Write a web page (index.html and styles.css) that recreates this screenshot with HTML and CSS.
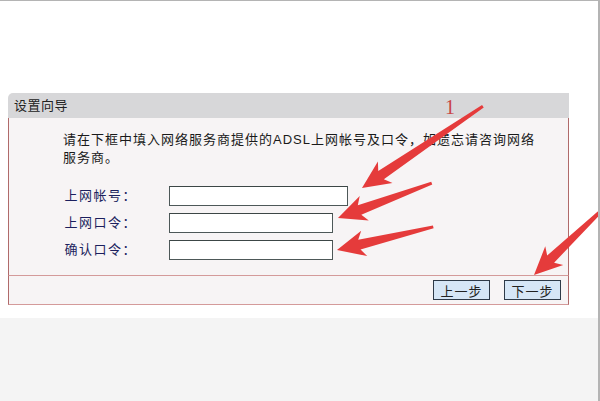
FILE: index.html
```html
<!DOCTYPE html>
<html lang="zh-CN">
<head>
  <meta charset="UTF-8">
  <title>设置向导</title>
  <link rel="stylesheet" href="styles.css">
</head>
<body>
<div class="frame">
  <div class="top">
    <div class="panel">
      <div class="panel-head">设置向导</div>
      <div class="panel-body">
        <p class="intro">请在下框中填入网络服务商提供的ADSL上网帐号及口令，如遗忘请咨询网络服务商。</p>
        <div class="form-grid">
          <label for="user">上网帐号：</label>
          <input type="text" id="user" class="long">
          <label for="pass">上网口令：</label>
          <input type="password" id="pass">
          <label for="pass2">确认口令：</label>
          <input type="password" id="pass2">
        </div>
      </div>
      <div class="panel-foot">
        <button>上一步</button>
        <button>下一步</button>
      </div>
    </div>
  </div>
  <div class="bottom"></div>

  <svg class="marks" width="600" height="401" viewBox="0 0 600 401">
    <text x="445" y="114" class="num">1</text>
    <g fill="#e53b3b">
      <polygon transform="translate(362,188) rotate(-34.1)" points="0,0 28,-13 23,-5 146,-1.5 146,1.5 23,5 28,13"/>
      <polygon transform="translate(338,218) rotate(-20.4)" points="0,0 28,-13 23,-5 100,-1.5 100,1.5 23,5 28,13"/>
      <polygon transform="translate(337,250) rotate(-13.5)" points="0,0 28,-13 23,-5 99,-1.5 99,1.5 23,5 28,13"/>
      <polygon transform="translate(534,275) rotate(-43.7)" points="0,0 28,-13 23,-5 100,-1.5 100,1.5 23,5 28,13"/>
    </g>
  </svg>
</div>
</body>
</html>
```

FILE: styles.css
```css
body {
  margin: 0;
  font-family: "Liberation Sans", "Noto Sans CJK SC", sans-serif;
  font-size: 13px;
  color: #1a1a1a;
}

.frame {
  position: relative;
  width: 598px;
  height: 400px;
  border-top: 1px solid #b4b4b4;
  border-right: 2px solid #b4b4b4;
  display: flex;
  flex-direction: column;
  overflow: hidden;
}

.top {
  background: #fff;
  padding: 92px 0 13px 8px;
}

.bottom {
  flex: 1;
  background: #f4f4f4;
}

.panel {
  width: 561px;
}

.panel-head {
  height: 25px;
  line-height: 25px;
  padding-left: 6px;
  background: #d7d7d9;
  border-top-left-radius: 5px;
  color: #222;
  letter-spacing: 0.5px;
}

.panel-body {
  background: #f7f4f5;
  border-left: 1px solid #b06a6a;
  border-right: 1px solid #b06a6a;
  border-bottom: 1px solid #d49a9a;
  padding: 13px 0 15px 54px;
}

.intro {
  margin: 0 0 19px;
  width: 472px;
  line-height: 18px;
  letter-spacing: 1px;
}

.form-grid {
  display: grid;
  grid-template-columns: 74px auto;
  column-gap: 32px;
  row-gap: 7px;
  align-items: center;
  justify-items: start;
}

.form-grid label {
  justify-self: end;
  white-space: nowrap;
  color: #1c1f5e;
  letter-spacing: 1.5px;
  line-height: 20px;
}

.form-grid input {
  width: 162px;
  height: 18px;
  padding: 0;
  border: 1px solid #4d5858;
  border-top-color: #3c4646;
  background: #fff;
  box-sizing: content-box;
}

.form-grid input.long {
  width: 177px;
}

.panel-foot {
  background: #f7f4f5;
  border-left: 1px solid #b06a6a;
  border-right: 1px solid #b06a6a;
  border-bottom: 1px solid #d49a9a;
  padding: 4px 7px 4px 0;
  display: flex;
  justify-content: flex-end;
  gap: 14px;
}

.panel-foot button {
  width: 57px;
  height: 20px;
  padding: 0;
  background: #d6e6f6;
  border: 1px solid #2e3a48;
  font-family: inherit;
  font-size: 13px;
  letter-spacing: 1px;
  color: #222;
}

.marks {
  position: absolute;
  top: -1px;
  left: 0;
  pointer-events: none;
}

.num {
  font-family: "Liberation Serif", serif;
  font-size: 20px;
  fill: #c94545;
}
```
